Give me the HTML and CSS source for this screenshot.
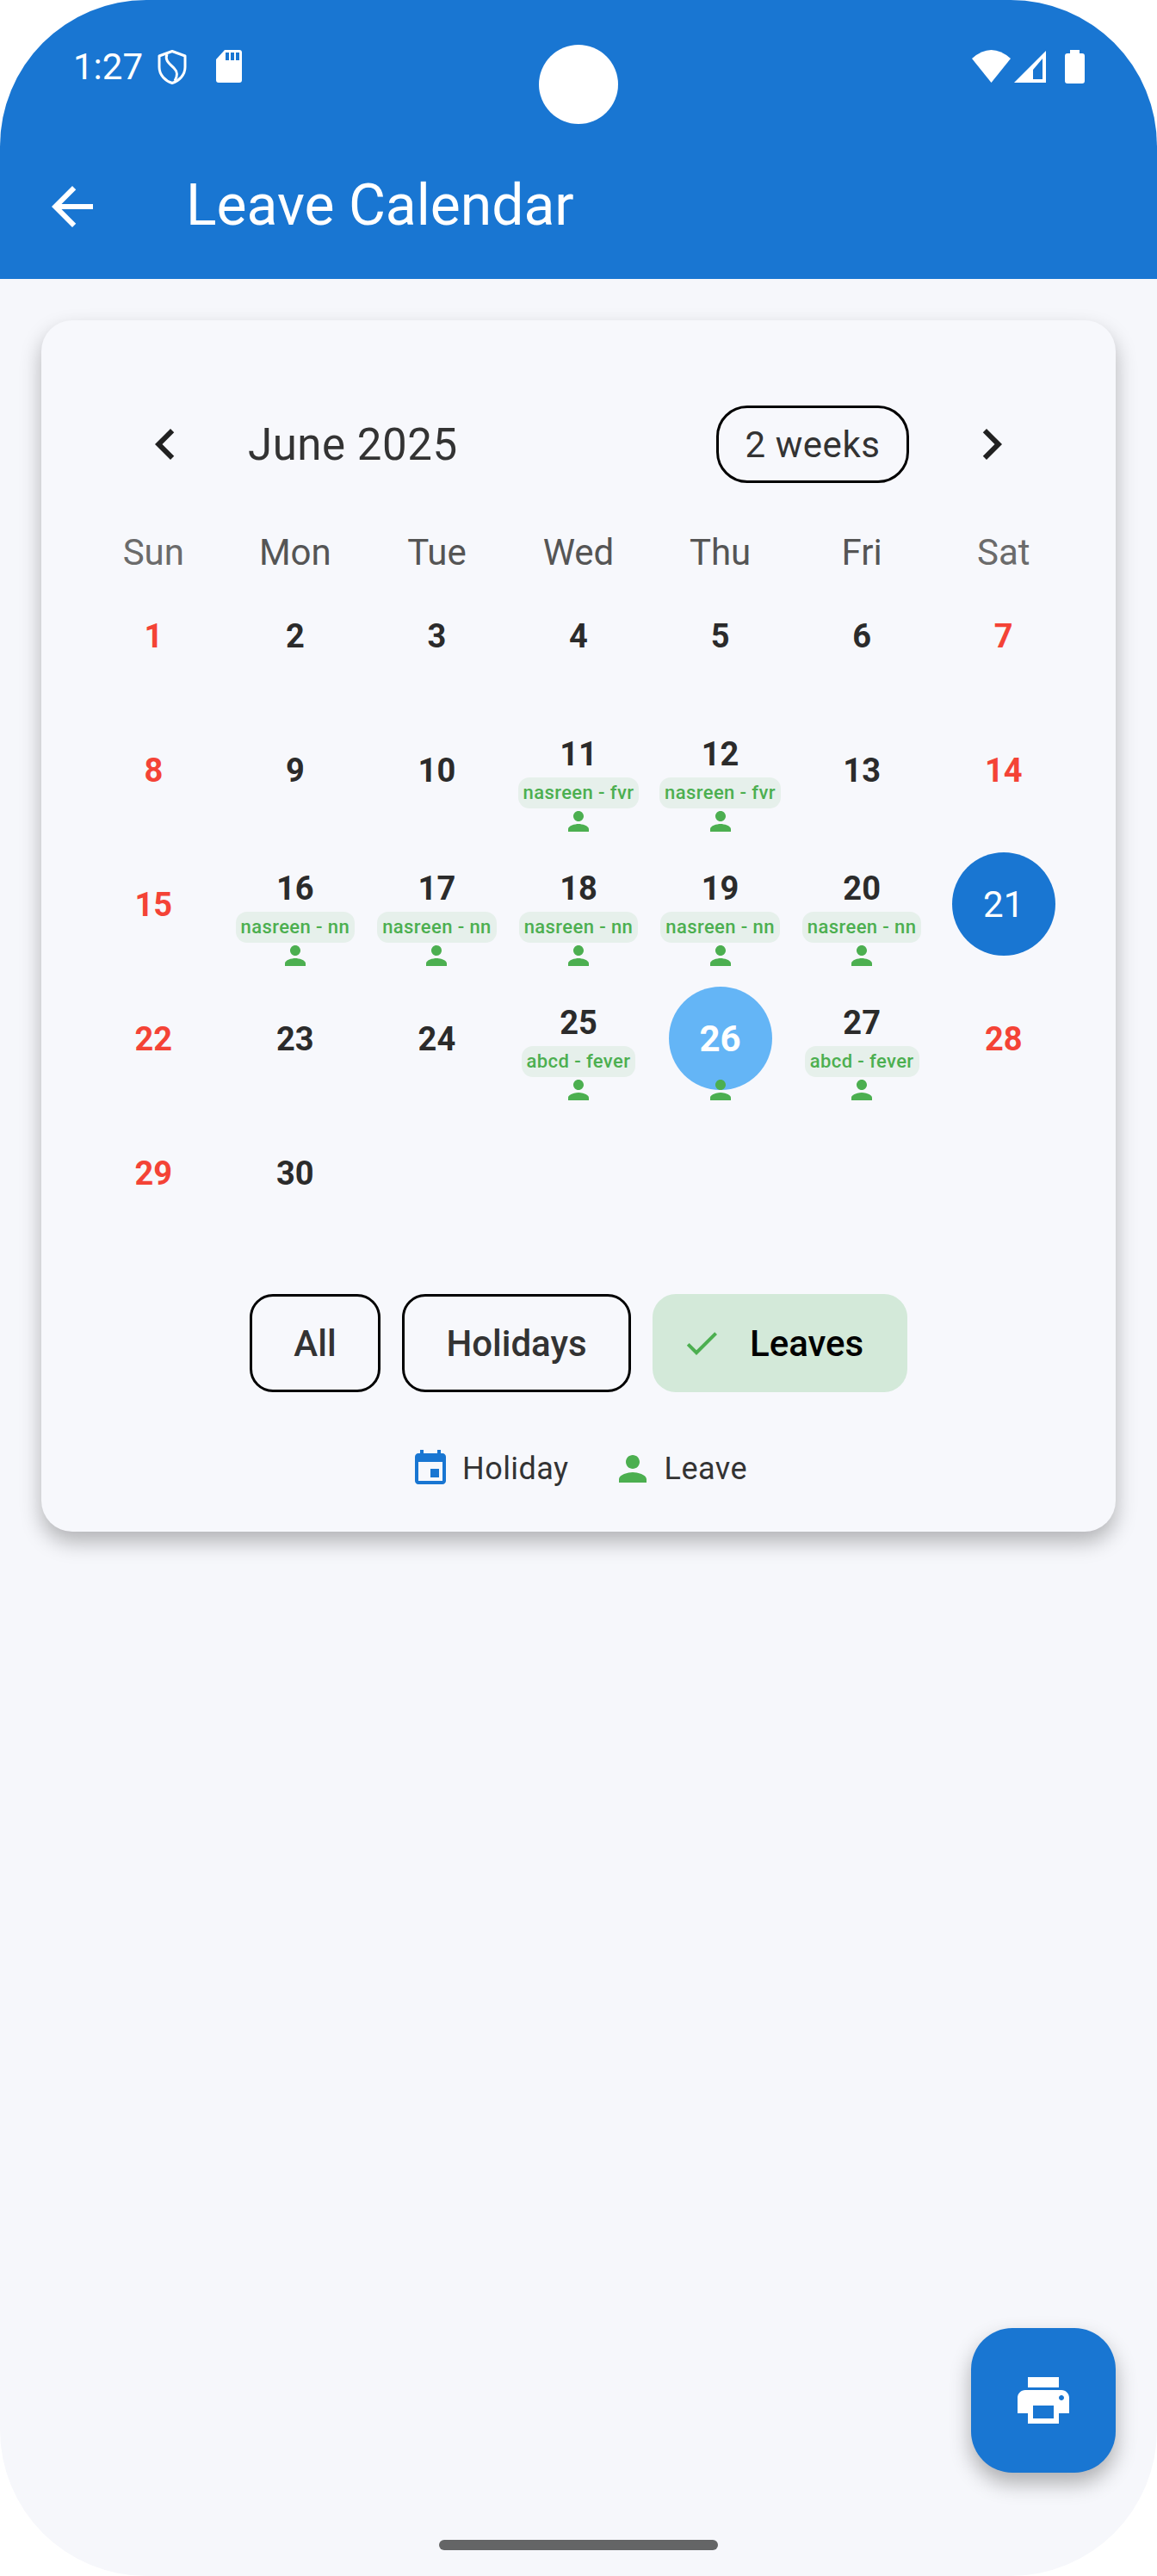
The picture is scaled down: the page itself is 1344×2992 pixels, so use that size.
FILE: index.html
```html
<!DOCTYPE html>
<html lang="en">
<head>
<meta charset="utf-8">
<title>Leave Calendar</title>
<link rel="stylesheet" href="styles.css">
</head>
<body>
<svg class="sprites" width="0" height="0" aria-hidden="true">
  <symbol id="person" viewBox="0 0 24 24"><path d="M12 12c2.21 0 4-1.79 4-4s-1.79-4-4-4-4 1.79-4 4 1.79 4 4 4zm0 2c-2.67 0-8 1.34-8 4v2h16v-2c0-2.66-5.33-4-8-4z"/></symbol>
</svg>
<div class="screen">
  <header class="appbar">
    <div class="status">
      <span class="time">1:27</span>
      <svg class="i-shield" width="34" height="40" viewBox="0 0 34 40"><path d="M17 1.5 32 7v13c0 9-7 16-15 18.5C9 36 2 29 2 20V7z" fill="none" stroke="#fff" stroke-width="3" stroke-linejoin="round"/><path d="M11 5c-3 7 3 11 8 16 4 4 5 8 1 15" fill="none" stroke="#fff" stroke-width="3"/></svg>
      <svg class="i-sd" width="30" height="38" viewBox="0 0 30 38"><path d="M10 0h17a3 3 0 0 1 3 3v32a3 3 0 0 1-3 3H3a3 3 0 0 1-3-3V11z" fill="#fff"/><path d="M11 3h4v9h-4zM17 3h4v9h-4zM23 3h4v9h-4z" fill="#1976d2"/></svg>
      <span class="status-right">
        <svg width="45" height="38" viewBox="0 0 45 38"><path d="M0 10Q22.500-10 45 10L22.500 38z" fill="#fff"/></svg>
        <svg class="i-signal" width="37" height="37" viewBox="0 0 37 37"><path d="M37 0v37H0z" fill="#fff"/><path d="M33 9v24H22V22z" fill="#1976d2"/></svg>
        <svg class="i-battery" width="23" height="39" viewBox="0 0 23 39"><path d="M6 0h11v4h3a3 3 0 0 1 3 3v29a3 3 0 0 1-3 3H3a3 3 0 0 1-3-3V7a3 3 0 0 1 3-3h3z" fill="#fff"/></svg>
      </span>
    </div>
    <div class="toolbar">
      <svg class="icon-72" viewBox="0 0 24 24" fill="#fff"><path d="M20 11H7.830l5.590-5.590L12 4l-8 8 8 8 1.410-1.410L7.830 13H20v-2z"/></svg>
      <h1 class="title">Leave Calendar</h1>
    </div>
  </header>
  <div class="camera"></div>

  <main class="card">
    <div class="cal-head">
      <svg class="icon-72 ink" viewBox="0 0 24 24"><path d="M15.410 7.410 14 6l-6 6 6 6 1.410-1.410L10.830 12z"/></svg>
      <span class="month">June 2025</span>
      <span class="format-btn">2 weeks</span>
      <svg class="icon-72 ink" viewBox="0 0 24 24"><path d="M10 6 8.590 7.410 13.170 12l-4.580 4.590L10 18l6-6z"/></svg>
    </div>

    <div class="weekdays">
      <span class="wk-end">Sun</span><span>Mon</span><span>Tue</span><span>Wed</span><span>Thu</span><span>Fri</span><span class="wk-end">Sat</span>
    </div>

    <div class="days">
      <div class="cell"><b class="num red">1</b></div>
      <div class="cell"><b class="num">2</b></div>
      <div class="cell"><b class="num">3</b></div>
      <div class="cell"><b class="num">4</b></div>
      <div class="cell"><b class="num">5</b></div>
      <div class="cell"><b class="num">6</b></div>
      <div class="cell"><b class="num red">7</b></div>

      <div class="cell"><b class="num red">8</b></div>
      <div class="cell"><b class="num">9</b></div>
      <div class="cell"><b class="num">10</b></div>
      <div class="cell event"><b class="num">11</b><span class="tag">nasreen - fvr</span><svg class="person"><use href="#person"/></svg></div>
      <div class="cell event"><b class="num">12</b><span class="tag">nasreen - fvr</span><svg class="person"><use href="#person"/></svg></div>
      <div class="cell"><b class="num">13</b></div>
      <div class="cell"><b class="num red">14</b></div>

      <div class="cell"><b class="num red">15</b></div>
      <div class="cell event"><b class="num">16</b><span class="tag">nasreen - nn</span><svg class="person"><use href="#person"/></svg></div>
      <div class="cell event"><b class="num">17</b><span class="tag">nasreen - nn</span><svg class="person"><use href="#person"/></svg></div>
      <div class="cell event"><b class="num">18</b><span class="tag">nasreen - nn</span><svg class="person"><use href="#person"/></svg></div>
      <div class="cell event"><b class="num">19</b><span class="tag">nasreen - nn</span><svg class="person"><use href="#person"/></svg></div>
      <div class="cell event"><b class="num">20</b><span class="tag">nasreen - nn</span><svg class="person"><use href="#person"/></svg></div>
      <div class="cell"><span class="circle today">21</span></div>

      <div class="cell"><b class="num red">22</b></div>
      <div class="cell"><b class="num">23</b></div>
      <div class="cell"><b class="num">24</b></div>
      <div class="cell event"><b class="num">25</b><span class="tag">abcd - fever</span><svg class="person"><use href="#person"/></svg></div>
      <div class="cell"><span class="circle selected">26</span><svg class="person over"><use href="#person"/></svg></div>
      <div class="cell event"><b class="num">27</b><span class="tag">abcd - fever</span><svg class="person"><use href="#person"/></svg></div>
      <div class="cell"><b class="num red">28</b></div>

      <div class="cell"><b class="num red">29</b></div>
      <div class="cell"><b class="num">30</b></div>
      <div class="cell"></div>
      <div class="cell"></div>
      <div class="cell"></div>
      <div class="cell"></div>
      <div class="cell"></div>
    </div>

    <div class="filters">
      <span class="chip chip-all">All</span>
      <span class="chip chip-hol">Holidays</span>
      <span class="chip chip-on">
        <svg class="check" viewBox="0 0 24 24"><path d="M9 16.170 4.830 12l-1.420 1.410L9 19 21 7l-1.410-1.410z"/></svg>
        Leaves
      </span>
    </div>

    <div class="legend">
      <svg class="icon-48 blue" viewBox="0 0 24 24"><path d="M17 12h-5v5h5v-5zM16 1v2H8V1H6v2H5c-1.110 0-1.990.9-1.990 2L3 19c0 1.100.89 2 2 2h14c1.100 0 2-.9 2-2V5c0-1.100-.9-2-2-2h-1V1h-2zm3 18H5V8h14v11z"/></svg>
      <span class="legend-text">Holiday</span>
      <svg class="icon-48 green legend-second"><use href="#person"/></svg>
      <span class="legend-text">Leave</span>
    </div>
  </main>

  <button class="fab" type="button" aria-label="Print">
    <svg class="icon-72" viewBox="0 0 24 24" fill="#fff"><path d="M19 8H5c-1.660 0-3 1.340-3 3v6h4v4h12v-4h4v-6c0-1.660-1.340-3-3-3zm-3 11H8v-5h8v5zm3-7c-.55 0-1-.45-1-1s.45-1 1-1 1 .45 1 1-.45 1-1 1zm-1-9H6v4h12V3z"/></svg>
  </button>
  <div class="home-bar"></div>
</div>
</body>
</html>
```

FILE: styles.css
```css
* { box-sizing: border-box; }

html, body {
  margin: 0;
  padding: 0;
  background: #fff;
}

body {
  font-family: Roboto, "Liberation Sans", sans-serif;
}

.sprites { position: absolute; }

.screen {
  position: relative;
  width: 1344px;
  height: 2992px;
  overflow: hidden;
  border-radius: 170px;
  background: #f6f7fb;
}

/* App bar */
.appbar {
  height: 324px;
  background: #1976d2;
  color: #fff;
}

.status {
  display: flex;
  align-items: flex-start;
  height: 156px;
  padding: 58px 84px 0 85px;
}

.time {
  font-size: 42px;
  line-height: 40px;
  margin-right: 17px;
}

.i-shield { margin-right: 34px; }

.status-right {
  display: flex;
  align-items: flex-start;
  margin-left: auto;
}

.i-signal { margin: 1px 0 0 4px; }
.i-battery { margin-left: 22px; }

.toolbar {
  display: flex;
  align-items: center;
  height: 168px;
  padding-left: 48px;
}

.title {
  margin: 0 0 2px 96px;
  font-size: 66px;
  font-weight: 400;
  line-height: 80px;
}

.icon-72 { width: 72px; height: 72px; flex: none; display: block; }
.icon-48 { width: 48px; height: 48px; flex: none; display: block; }
.ink { fill: #212121; }
.blue { fill: #1976d2; }
.green { fill: #4caf50; }

.camera {
  position: absolute;
  left: 626px;
  top: 52px;
  width: 92px;
  height: 92px;
  border-radius: 50%;
  background: #fff;
}

/* Card */
.card {
  margin: 48px 48px 0;
  padding: 99px 48px 49px;
  border-radius: 36px;
  background: #f7f8fc;
  box-shadow: 0 12px 24px rgba(0, 0, 0, .28);
}

.cal-head {
  display: flex;
  align-items: center;
  height: 90px;
  padding: 0 60px;
}

.month {
  margin-left: 60px;
  font-size: 51px;
  letter-spacing: .55px;
  color: #333;
}

.format-btn {
  display: flex;
  align-items: center;
  justify-content: center;
  width: 224px;
  height: 90px;
  margin-left: auto;
  margin-right: 60px;
  border: 3px solid #000;
  border-radius: 36px;
  font-size: 42px;
  letter-spacing: .55px;
  color: #333;
}

.weekdays {
  display: grid;
  grid-template-columns: repeat(7, 1fr);
  height: 36px;
  margin-top: 63px;
  font-size: 42px;
  line-height: 36px;
  text-align: center;
  color: #555;
}

.wk-end { color: #6b6b6b; }

.days {
  display: grid;
  grid-template-columns: repeat(7, 1fr);
  grid-auto-rows: 156px;
}

.cell {
  position: relative;
  display: flex;
  flex-direction: column;
  align-items: center;
  justify-content: center;
  min-width: 0;
}

.cell.event { justify-content: flex-end; }

.num {
  margin-top: 2px;
  font-size: 38px;
  font-weight: 700;
  line-height: 48px;
  color: #2b2b2b;
}

.num.red { color: #f44336; }

.event .num { margin: 0 0 3px; }

.tag {
  height: 36px;
  padding: 0 6px;
  border-radius: 13px;
  background: #e6f0eb;
  color: #4caf50;
  font-size: 22px;
  font-weight: 500;
  letter-spacing: .4px;
  line-height: 36px;
  white-space: nowrap;
}

.person {
  width: 36px;
  height: 36px;
  margin-top: -3px;
  fill: #4caf50;
  flex: none;
}

.person.over {
  position: absolute;
  left: 50%;
  bottom: 0;
  margin: 0 0 0 -18px;
}

.circle {
  display: flex;
  align-items: center;
  justify-content: center;
  width: 120px;
  height: 120px;
  border-radius: 50%;
  color: #fff;
  font-size: 42px;
}

.today { background: #1976d2; }
.selected { background: #64b5f6; font-weight: 700; }

/* Filters */
.filters {
  display: flex;
  justify-content: center;
  gap: 25px;
  margin-top: 63px;
}

.chip {
  display: flex;
  align-items: center;
  justify-content: center;
  height: 114px;
  border-radius: 27px;
  font-size: 42px;
  font-weight: 500;
  color: #333;
}

.chip-all, .chip-hol { border: 3px solid #000; }
.chip-all { width: 152px; }
.chip-hol { width: 266px; }

.chip-on {
  justify-content: flex-start;
  width: 296px;
  padding-left: 33px;
  background: #d3e9d9;
  color: #000;
}

.check {
  width: 48px;
  height: 48px;
  margin-right: 32px;
  fill: #4caf50;
  flex: none;
}

/* Legend */
.legend {
  display: flex;
  align-items: center;
  justify-content: center;
  height: 48px;
  margin-top: 65px;
}

.legend-text {
  margin-left: 13px;
  font-size: 36px;
  letter-spacing: .45px;
  color: #333;
}

.legend-second { margin-left: 50px; }

/* Floating button */
.fab {
  position: absolute;
  right: 48px;
  top: 2704px;
  display: flex;
  align-items: center;
  justify-content: center;
  width: 168px;
  height: 168px;
  padding: 0;
  border: 0;
  border-radius: 48px;
  background: #1976d2;
  box-shadow: 0 12px 24px rgba(0, 0, 0, .3);
}

.home-bar {
  position: absolute;
  left: 510px;
  top: 2950px;
  width: 324px;
  height: 12px;
  border-radius: 6px;
  background: #646566;
}
```
